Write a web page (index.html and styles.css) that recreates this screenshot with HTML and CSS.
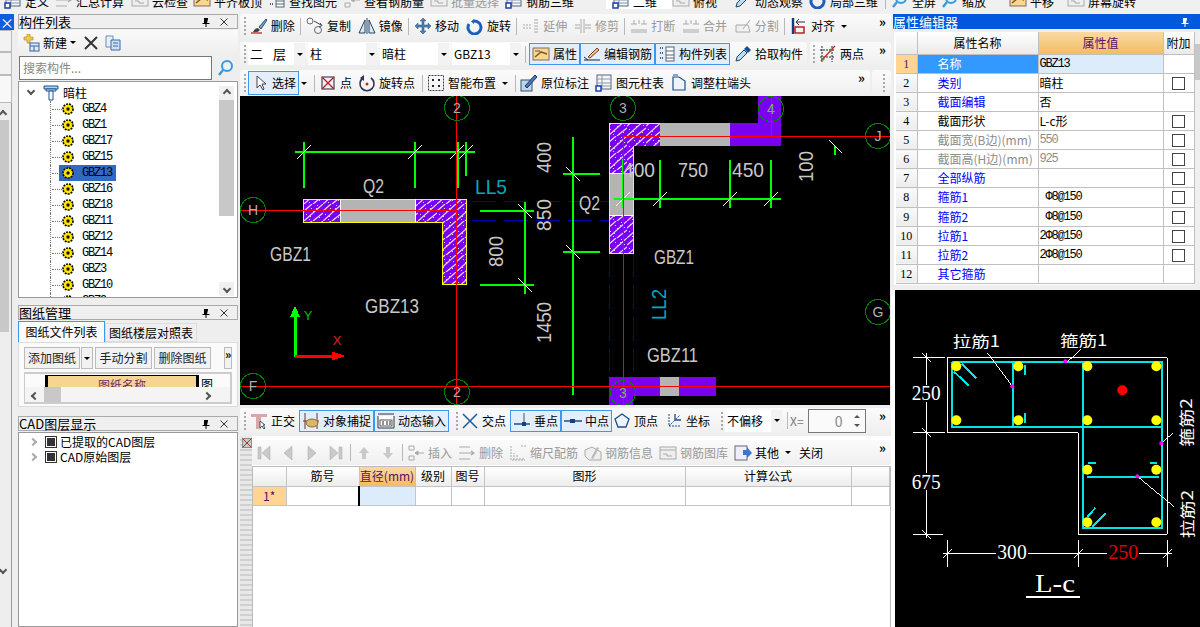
FILE: index.html
```html
<!DOCTYPE html>
<html lang="zh">
<head>
<meta charset="utf-8">
<title>属性编辑器</title>
<link rel="stylesheet" href="styles.css">
</head>
<body>
<svg class="defs" width="0" height="0" aria-hidden="true">
<defs>
<symbol id="brush" viewBox="0 0 18 18"><path d="M3 15 Q5 11 8 11 L10 13 Q8 16 3 15Z" fill="#444"/><path d="M9 10 L16 2 L17 3 L11 12Z" fill="#6aa0d8" stroke="#356"/><path d="M1 16 H12" stroke="#c33" stroke-width="1.4"/></symbol>
<symbol id="copyc" viewBox="0 0 18 18"><circle cx="4" cy="4" r="3" fill="none" stroke="#667"/><circle cx="12" cy="13" r="3.5" fill="none" stroke="#667"/><path d="M8 4 L15 8 M14 6 L16 8.5 L13 10" stroke="#345" fill="none"/></symbol>
<symbol id="mirror" viewBox="0 0 18 18"><path d="M7 3 L1 16 H7Z M11 3 L17 16 H11Z" fill="#dde8f4" stroke="#246"/><path d="M9 1 V17" stroke="#246"/></symbol>
<symbol id="move" viewBox="0 0 18 18"><path d="M9 1 L12 4 H10 V8 H14 V6 L17 9 L14 12 V10 H10 V14 H12 L9 17 L6 14 H8 V10 H4 V12 L1 9 L4 6 V8 H8 V4 H6Z" fill="#4a7fb5" stroke="#24507a" stroke-width=".5"/></symbol>
<symbol id="rot" viewBox="0 0 18 18"><path d="M8 2 L8 7 L5 4.5Z" fill="#1a5fc0"/><path d="M8 4 A6.5 6.5 0 1 1 3 7" fill="none" stroke="#1a5fc0" stroke-width="3"/></symbol>
<symbol id="ext" viewBox="0 0 18 18"><path d="M1 8 H10 M1 11 H10 M13 2 V16 M15 2 V16" stroke="#aaa" fill="none" stroke-dasharray="2 1"/></symbol>
<symbol id="trim" viewBox="0 0 18 18"><path d="M7 2 V16 M10 2 V16 M1 8 H6 M1 11 H6 M11 8 H17 M11 11 H17" stroke="#aaa" fill="none"/></symbol>
<symbol id="brk" viewBox="0 0 18 18"><path d="M4 3 V7 M9 3 V7 M14 3 V7 M1 7 H7 M11 7 H17 M1 13 H17 M1 15 H17" stroke="#aaa" fill="none"/></symbol>
<symbol id="split" viewBox="0 0 18 18"><path d="M2 15 L2 8 L14 8 M2 15 H16 M14 8 L16 15 M9 12 L16 3" stroke="#aaa" fill="#eee"/></symbol>
<symbol id="align" viewBox="0 0 18 18"><path d="M3 1 V17" stroke="#1a3a7c" stroke-width="2.4"/><path d="M6 5 H15 M6 5 L9 2 M6 5 L9 8" stroke="#333" fill="none"/><rect x="5" y="10" width="9" height="6" fill="none" stroke="#c02020" stroke-width="1.5"/></symbol>
<symbol id="attr" viewBox="0 0 18 18"><rect x="1" y="3" width="16" height="12" fill="#f6d98b" stroke="#866"/><path d="M3 12 L9 7 L15 9" stroke="#853" fill="none" stroke-width="1.6"/><path d="M3 6 H8" stroke="#555"/></symbol>
<symbol id="edit" viewBox="0 0 18 18"><path d="M1 15 H17 M1 12 L5 15" stroke="#223" fill="none"/><path d="M5 12 L14 3 L16 5 L7 13Z" fill="#e8c880" stroke="#742"/></symbol>
<symbol id="list" viewBox="0 0 18 18"><path d="M2 3 H5 M2 8 H5 M2 13 H5" stroke="#557" stroke-width="2" stroke-dasharray="1 1"/><rect x="8" y="2" width="8" height="14" fill="#fff" stroke="#567"/><path d="M8 6 H16 M8 10 H16 M8 13 H16" stroke="#567"/></symbol>
<symbol id="pick" viewBox="0 0 18 18"><path d="M2 16 L3 12 L10 5 L13 8 L6 15Z" fill="#bde" stroke="#246"/><path d="M10 4 L13 1 L17 5 L14 8Z" fill="#1a4f90"/></symbol>
<symbol id="two" viewBox="0 0 18 18"><path d="M3 1 V17 M13 1 V17 M1 5 H16 M1 12 H16" stroke="#223" stroke-dasharray="2 1"/><path d="M2 16 L16 1" stroke="#d22" stroke-width="1.3"/><circle cx="4" cy="14" r="1.6" fill="#5a8a2a"/><circle cx="12" cy="5" r="1.6" fill="#5a8a2a"/></symbol>
<symbol id="sel" viewBox="0 0 18 18"><path d="M6 2 V14 L9 11 L12 16 L13 15 L11 10 H15Z" fill="#fff" stroke="#445"/></symbol>
<symbol id="pt" viewBox="0 0 18 18"><rect x="3" y="3" width="12" height="12" fill="#eef" stroke="#223"/><path d="M3 3 L15 15 M15 3 L3 15" stroke="#b22" stroke-width="1.4"/></symbol>
<symbol id="rotp" viewBox="0 0 18 18"><path d="M5 4 A7 7 0 1 0 13 4" fill="none" stroke="#335" stroke-width="1.6"/><path d="M6 1 V7 L2 4Z" fill="#335"/><circle cx="9" cy="10" r="1.5" fill="#c22"/></symbol>
<symbol id="smart" viewBox="0 0 18 18"><rect x="1.500" y="1.500" width="15" height="15" fill="none" stroke="#345" stroke-dasharray="2 1"/><path d="M5 5 H7 V7 H5Z M11 5 H13 V7 H11Z M5 11 H7 V13 H5Z M11 11 H13 V13 H11Z" fill="#223"/></symbol>
<symbol id="orig" viewBox="0 0 18 18"><rect x="1" y="6" width="11" height="11" fill="#bcd4ee" stroke="#356"/><path d="M5 12 L15 1 L17 3 L7 14Z" fill="#4a78c0" stroke="#235"/></symbol>
<symbol id="coltb" viewBox="0 0 18 18"><rect x="2" y="1" width="14" height="14" fill="#f4f6fa" stroke="#567"/><path d="M2 5 H16 M2 9 H16 M2 12 H16 M7 1 V15" stroke="#89a"/><rect x="1" y="12" width="5" height="5" fill="#fff" stroke="#1a3fa0" stroke-width="1.5"/></symbol>
<symbol id="adj" viewBox="0 0 18 18"><path d="M3 3 H9 L15 7 V16 H3Z M8 1 H3" fill="#eef3fa" stroke="#1a4f90" stroke-width="1.2"/></symbol>
<symbol id="orth" viewBox="0 0 18 18"><path d="M1 2 H17 V5 H11 V17 H6 V5 H1Z" fill="#d8a8a8"/><path d="M10 9 V16 L12 14 L14 17 L15 16 L13 13 H15Z" fill="#fff" stroke="#456"/></symbol>
<symbol id="snap" viewBox="0 0 18 18"><path d="M3 1 V17 M15 1 V17 M1 9 H17" stroke="#633" fill="none"/><ellipse cx="10" cy="11" rx="6" ry="4" fill="#d8b860" stroke="#864"/></symbol>
<symbol id="dyn" viewBox="0 0 18 18"><path d="M1 2 H17 M1 4 V16 H17 V4" stroke="#333" fill="#fff"/><rect x="3" y="8" width="12" height="6" fill="#fff" stroke="#555"/><path d="M6 9 V13 M10 9 V13 M13 9 V13" stroke="#222"/></symbol>
<symbol id="cross" viewBox="0 0 18 18"><path d="M2 2 L16 16 M16 2 L2 16" stroke="#1a5ca0" stroke-width="1.5"/></symbol>
<symbol id="perp" viewBox="0 0 18 18"><path d="M1 12 H17" stroke="#1a4f90" stroke-width="1.5"/><path d="M11 1 V12" stroke="#456"/><rect x="9" y="10" width="4" height="4" fill="#1a3f80"/></symbol>
<symbol id="midp" viewBox="0 0 18 18"><path d="M0 9 H18" stroke="#1a4f90" stroke-width="1.5"/><rect x="6" y="7" width="5" height="4" fill="#1a3f80"/></symbol>
<symbol id="vtx" viewBox="0 0 18 18"><path d="M9 2 L16 7 L13 15 H5 L2 7Z" fill="#eef4fb" stroke="#1a4f90" stroke-width="1.3"/></symbol>
<symbol id="coord" viewBox="0 0 18 18"><path d="M4 2 V14 H16 M4 14 L15 3" stroke="#1a4f90" fill="none" stroke-dasharray="2 1"/><path d="M10 2 V8 H16" stroke="#1a4f90" fill="none" stroke-width="1.3"/></symbol>
<symbol id="first" viewBox="0 0 18 18"><path d="M3 3 H6 V15 H3Z M15 2 V16 L7 9Z" fill="#c9c9c9" stroke="#aaa" stroke-width=".5"/></symbol>
<symbol id="prev" viewBox="0 0 18 18"><path d="M13 2 V16 L5 9Z" fill="#c9c9c9" stroke="#aaa" stroke-width=".5"/></symbol>
<symbol id="next" viewBox="0 0 18 18"><path d="M5 2 V16 L13 9Z" fill="#c9c9c9" stroke="#aaa" stroke-width=".5"/></symbol>
<symbol id="last" viewBox="0 0 18 18"><path d="M12 3 H15 V15 H12Z M3 2 V16 L11 9Z" fill="#c9c9c9" stroke="#aaa" stroke-width=".5"/></symbol>
<symbol id="up" viewBox="0 0 18 18"><path d="M9 3 L14 9 H11 V15 H7 V9 H4Z" fill="#c9c9c9"/></symbol>
<symbol id="down" viewBox="0 0 18 18"><path d="M9 15 L14 9 H11 V3 H7 V9 H4Z" fill="#c9c9c9"/></symbol>
<symbol id="ins" viewBox="0 0 18 18"><path d="M2 2 H7 V6 H2Z M2 12 H7 V16 H2Z" fill="none" stroke="#aaa"/><path d="M8 9 H17 M8 9 L11 7 V11Z" stroke="#aaa" fill="#aaa"/></symbol>
<symbol id="del2" viewBox="0 0 18 18"><path d="M1 3 H12 M1 15 H12 M1 9 H16 M13 7 L16 9 L13 11" stroke="#aaa" fill="none" stroke-width="1.2"/></symbol>
<symbol id="scale" viewBox="0 0 18 18"><path d="M2 2 V16 H16 M5 16 V9 M8 16 V11 M11 16 V13 M14 16 V14 M12 2 H17" stroke="#aaa" fill="none" stroke-dasharray="2 1"/></symbol>
<symbol id="info" viewBox="0 0 18 18"><path d="M1 6 L8 3 L17 8 V16 H5 L1 12Z" fill="#eee" stroke="#aaa"/><path d="M7 14 L13 3 L15 4 L9 15Z" fill="#bbb"/></symbol>
<symbol id="lib" viewBox="0 0 18 18"><rect x="1" y="3" width="16" height="12" fill="#eee" stroke="#aaa"/><path d="M1 6 H17 M4 10 H8 V12 H13" stroke="#aaa" fill="none"/></symbol>
<symbol id="other" viewBox="0 0 18 18"><rect x="1" y="2" width="12" height="14" fill="#eef" stroke="#667"/><path d="M9 6 H13 V3 L18 9 L13 14 V11 H9Z" fill="#3a78d0"/></symbol>
<symbol id="nw" viewBox="0 0 18 18"><path d="M5 0 H8 V3 H11 V6 H8 V9 H5 V6 H2 V3 H5Z" fill="#f2c94a" stroke="#a5831a" stroke-width=".6"/><rect x="8" y="9" width="9" height="8" fill="#dfe9f5" stroke="#37629a"/><path d="M8 12 H17 M12 12 V17" stroke="#37629a"/></symbol>
<symbol id="xbig" viewBox="0 0 18 18"><path d="M3 3 L15 15 M15 3 L3 15" stroke="#333" stroke-width="2"/></symbol>
<symbol id="cp2" viewBox="0 0 18 18"><path d="M2 2 H9 V13 H2Z" fill="#e8f0fa" stroke="#6a8ab8"/><path d="M7 6 H16 V16 H7Z" fill="#cfe0f5" stroke="#3a6aa8"/><path d="M9 9 H14 M9 12 H14" stroke="#3a6aa8"/></symbol>
<symbol id="mag" viewBox="0 0 18 18"><circle cx="10" cy="7" r="5" fill="#e6f3fb" stroke="#3a9ad8" stroke-width="2"/><path d="M6 11 L2 16" stroke="#3a9ad8" stroke-width="2.4"/></symbol>
<symbol id="gear" viewBox="0 0 12 12"><circle cx="6" cy="6" r="5" fill="#ffe000" stroke="#000" stroke-width="1.6" stroke-dasharray="2 1"/><circle cx="6" cy="6" r="3.400" fill="#ffe600"/><circle cx="6" cy="6" r="1.700" fill="#111"/></symbol>
<symbol id="colm" viewBox="0 0 16 16"><path d="M1 1 H15 V4 H1Z" fill="#b8d0ec" stroke="#1a5090"/><path d="M3 4 H13 V6 H3Z" fill="#dbe8f6" stroke="#1a5090"/><path d="M6 6 H10 V15 H6Z" fill="#fff" stroke="#1a5090"/></symbol>
<symbol id="pin" viewBox="0 0 10 10"><path d="M3 1 H7 V6 H8.500 V7 H5.500 V10 H4.500 V7 H1.500 V6 H3Z M6 2 V6 H7" fill="#000"/></symbol>
<symbol id="cl" viewBox="0 0 10 10"><path d="M1.500 1.500 L8.500 8.500 M8.500 1.500 L1.500 8.500" stroke="#333" fill="none"/></symbol>
<pattern id="hatch" patternUnits="userSpaceOnUse" width="19" height="17">
<rect width="19" height="17" fill="#7a00f0"/>
<path d="M0 17 L19 0 M9 17 L19 9 M0 7 L8 0" stroke="#e4e0f0" stroke-width="1.200"/>
<path d="M3 3 h1 v1 h-1z M12 4 h1 v1 h-1z M6 12 h1 v1 h-1z M15 13 h1 v1 h-1z M9 7 h1 v1 h-1z M2 10 h1 v1 h-1z M16 6 h1 v1 h-1z M13 1 h1 v1 h-1z M5 15 h1 v1 h-1z M11 14 h1 v1 h-1z M7 4 h1 v1 h-1z" fill="#ddd"/>
</pattern>
</defs>
</svg>

<header class="topbar">
<span class="it t1"><svg class="i"><use href="#coltb"/></svg>定义</span>
<span class="it t2"><svg class="i"><use href="#del2"/></svg>汇总计算</span>
<span class="it t3"><svg class="i"><use href="#lib"/></svg>云检查</span>
<span class="it t4"><svg class="i"><use href="#attr"/></svg>平齐板顶</span>
<span class="it t5"><svg class="i"><use href="#list"/></svg>查找图元</span>
<span class="it t6"><svg class="i"><use href="#ins"/></svg>查看钢筋量</span>
<span class="it t7 off"><svg class="i"><use href="#lib"/></svg>批量选择</span>
<span class="it t8"><svg class="i"><use href="#coltb"/></svg>钢筋三维</span>
<span class="it t9"><svg class="i"><use href="#coltb"/></svg>二维</span>
<span class="it t10"><svg class="i"><use href="#lib"/></svg>俯视</span>
<span class="it t11"><svg class="i"><use href="#pick"/></svg>动态观察</span>
<span class="it t12"><svg class="i"><use href="#rot"/></svg>局部三维</span>
<span class="sep t13"></span>
<span class="it t14"><svg class="i"><use href="#mag"/></svg>全屏</span>
<span class="it t15"><svg class="i"><use href="#mag"/></svg>缩放</span>
<span class="it t16"><svg class="i"><use href="#attr"/></svg>平移</span>
<span class="it t17"><svg class="i"><use href="#lib"/></svg>屏幕旋转</span>
</header>

<div class="main">
<aside class="sliver">
<div class="sl-x">×</div>
<div class="sl-box"></div>
<div class="sl-box sl-2"></div>
<div class="sl-box sl-3"></div>
<div class="sl-tree">
<div class="sl-arrow"><i class="cv u"></i></div>
<div class="sl-thumb"></div>
<div class="sl-down"><i class="cv d"></i></div>
</div>
</aside>

<section class="left">
<div class="ptitle"><span class="ptext">构件列表</span><svg class="pico"><use href="#pin"/></svg><svg class="pico"><use href="#cl"/></svg></div>
<div class="lt-tools">
<svg class="i"><use href="#nw"/></svg><span class="lt-new">新建</span><span class="caret"></span>
<svg class="i lt-x"><use href="#xbig"/></svg><svg class="i lt-c"><use href="#cp2"/></svg>
</div>
<div class="searchrow">
<div class="search">搜索构件...</div>
<svg class="i srch"><use href="#mag"/></svg>
</div>
<div class="tree">
<div class="tree-list">
<div class="root"><i class="cv d chev"></i><svg class="colm"><use href="#colm"/></svg><span>暗柱</span></div>
<div class="node"><svg class="g"><use href="#gear"/></svg><span class="mono">GBZ4</span></div>
<div class="node"><svg class="g"><use href="#gear"/></svg><span class="mono">GBZ1</span></div>
<div class="node"><svg class="g"><use href="#gear"/></svg><span class="mono">GBZ17</span></div>
<div class="node"><svg class="g"><use href="#gear"/></svg><span class="mono">GBZ15</span></div>
<div class="node on"><svg class="g"><use href="#gear"/></svg><span class="mono">GBZ13</span></div>
<div class="node"><svg class="g"><use href="#gear"/></svg><span class="mono">GBZ16</span></div>
<div class="node"><svg class="g"><use href="#gear"/></svg><span class="mono">GBZ18</span></div>
<div class="node"><svg class="g"><use href="#gear"/></svg><span class="mono">GBZ11</span></div>
<div class="node"><svg class="g"><use href="#gear"/></svg><span class="mono">GBZ12</span></div>
<div class="node"><svg class="g"><use href="#gear"/></svg><span class="mono">GBZ14</span></div>
<div class="node"><svg class="g"><use href="#gear"/></svg><span class="mono">GBZ3</span></div>
<div class="node"><svg class="g"><use href="#gear"/></svg><span class="mono">GBZ10</span></div>
<div class="node"><svg class="g"><use href="#gear"/></svg><span class="mono">GBZ9</span></div>
</div>
<div class="tree-sb"><div class="sb-a"><i class="cv u"></i></div><div class="sb-t"></div><div class="sb-a sb-d"><i class="cv d"></i></div></div>
</div>

<div class="ptitle p2"><span class="ptext">图纸管理</span><svg class="pico"><use href="#pin"/></svg><svg class="pico"><use href="#cl"/></svg></div>
<div class="tabs"><span class="tab act">图纸文件列表</span><span class="tab">图纸楼层对照表</span></div>
<div class="dwg">
<div class="dwg-btns">
<span class="btn b1">添加图纸</span><span class="btn b2"><span class="caret"></span></span><span class="btn b3">手动分割</span><span class="btn b3">删除图纸</span><span class="more-box">»</span>
</div>
<div class="dwg-tbl">
<div class="dwg-head"><span class="dh-cell">图纸名称</span><span class="dh-more">图</span></div>
<div class="dwg-sb"><span class="dsb-l"><i class="cv l"></i></span><span class="dsb-t"></span><span class="dsb-r"><i class="cv r"></i></span></div>
</div>
</div>

<div class="ptitle p3"><span class="ptext">CAD图层显示</span><svg class="pico"><use href="#pin"/></svg><svg class="pico"><use href="#cl"/></svg></div>
<div class="layers">
<div class="layer"><i class="cv r chev2"></i><span class="chk"></span><span>已提取的CAD图层</span></div>
<div class="layer"><i class="cv r chev2"></i><span class="chk"></span><span>CAD原始图层</span></div>
</div>
</section>

<section class="center">
<div class="tb tb1">
<span class="grip"></span>
<span class="it"><svg class="i"><use href="#brush"/></svg>删除</span><span class="sep"></span>
<span class="it"><svg class="i"><use href="#copyc"/></svg>复制</span>
<span class="it"><svg class="i"><use href="#mirror"/></svg>镜像</span><span class="sep"></span>
<span class="it"><svg class="i"><use href="#move"/></svg>移动</span>
<span class="it"><svg class="i"><use href="#rot"/></svg>旋转</span><span class="sep"></span>
<span class="it off"><svg class="i"><use href="#ext"/></svg>延伸</span>
<span class="it off"><svg class="i"><use href="#trim"/></svg>修剪</span><span class="sep"></span>
<span class="it off"><svg class="i"><use href="#brk"/></svg>打断</span>
<span class="it off"><svg class="i"><use href="#brk"/></svg>合并</span>
<span class="it off"><svg class="i"><use href="#split"/></svg>分割</span><span class="sep"></span>
<span class="it"><svg class="i"><use href="#align"/></svg>对齐<span class="caret"></span></span>
<span class="more">»</span>
</div>

<div class="tbrow">
<div class="tb tb2">
<span class="grip"></span>
<span class="dd d0"><span class="dd-t spread"><span>二</span><span>层</span></span><span class="dd-b"><span class="caret"></span></span></span>
<span class="dd"><span class="dd-t">柱</span><span class="dd-b"><span class="caret"></span></span></span>
<span class="dd"><span class="dd-t">暗柱</span><span class="dd-b"><span class="caret"></span></span></span>
<span class="dd"><span class="dd-t">GBZ13</span><span class="dd-b"><span class="caret"></span></span></span>
<span class="sep s2"></span>
<span class="it act w1"><svg class="i"><use href="#attr"/></svg>属性</span>
<span class="it act w2"><svg class="i"><use href="#edit"/></svg>编辑钢筋</span>
<span class="it act w2"><svg class="i"><use href="#list"/></svg>构件列表</span>
<span class="it pick"><svg class="i"><use href="#pick"/></svg>拾取构件</span>
</div>
<div class="tb tb2b">
<span class="grip"></span>
<span class="it"><svg class="i"><use href="#two"/></svg>两点</span>
<span class="more">»</span>
</div>
</div>

<div class="tbrow">
<div class="tb tb3">
<span class="grip"></span>
<span class="it act w1 s3"><svg class="i"><use href="#sel"/></svg>选择</span><span class="caret cs"></span><span class="sep"></span>
<span class="it"><svg class="i"><use href="#pt"/></svg>点</span>
<span class="it"><svg class="i"><use href="#rotp"/></svg>旋转点</span><span class="sep"></span>
<span class="it"><svg class="i"><use href="#smart"/></svg>智能布置<span class="caret"></span></span><span class="sep"></span>
<span class="it"><svg class="i"><use href="#orig"/></svg>原位标注</span>
<span class="it"><svg class="i"><use href="#coltb"/></svg>图元柱表</span>
<span class="it"><svg class="i"><use href="#adj"/></svg>调整柱端头</span>
<span class="more">»</span>
</div>
<div class="tb tb3b"><span class="grip"></span></div>
</div>

<div class="canvas">
<svg class="cad" viewBox="240 96 650 309" width="650" height="309">
<g shape-rendering="crispEdges">
<path d="M472 201 H610 M472 220 H610" stroke="#0000b0" stroke-dasharray="24 8" fill="none"/>
<path d="M609 253 V371 M633 253 V371" stroke="#0000b0" stroke-dasharray="24 8" fill="none"/>

<path d="M304 199 H340 V222 H304Z M415 199 H466 V284 H442 V222 H415Z" fill="url(#hatch)"/>
<rect x="340" y="199" width="75" height="23" fill="#b4b4b4"/>
<path d="M303.500 199.500 H466.500 V284.500 H442.500 V222.500 H303.500Z" fill="none" stroke="#ffff00"/>
<path d="M340.500 199 V222 M415.500 199 V222" stroke="#fff"/>

<path d="M609 123 H660 V146 H633 V253 H609Z" fill="url(#hatch)"/>
<rect x="609" y="173" width="24" height="42" fill="#b4b4b4"/>
<rect x="660" y="123" width="70" height="23" fill="#b4b4b4"/>
<path d="M730 123 H758 V96 H781 V146 H730Z" fill="#7a00f0"/>
<path d="M660 123.500 H609.500 V253.500 H633.500 V146" fill="none" stroke="#ffff00"/>
<path d="M609 173.500 H633 M609 215.500 H633" stroke="#fff"/>

<path d="M609 377 H660 V396 H633 V405 H609Z M679 377 H716 V396 H679Z" fill="#7a00f0"/>
<rect x="660" y="377" width="19" height="19" fill="#b4b4b4"/>

<g stroke="#00ff00" stroke-width="2" fill="none">
<path d="M295 152 H475 M304 142 V188 M415 142 V188 M458 142 V188 M466 142 V176"/>
<path d="M480 211 H534 M480 285 H534 M525 202 V294"/>
<path d="M563 174 H600 M563 252 H600 M573 137 V395"/>
<path d="M614 199 H781 M623 159 V208 M660 160 V208 M730 160 V208 M771 160 V208"/>
<path d="M835 146 V155"/>
</g>
<g stroke="#fff" fill="none">
<path d="M297 159 L311 145 M408 159 L422 145 M450 159 L464 145 M459 159 L473 145"/>
<path d="M518 204 L532 218 M518 278 L532 292 M566 167 L580 181 M566 245 L580 259"/>
<path d="M616 206 L630 192 M653 206 L667 192 M723 206 L737 192 M764 206 L778 192 M829 140 L842 153"/>
</g>
<g stroke="#ff0000" fill="none">
<path d="M456.500 96 V405 M240 210.500 H458 M240 386.500 H891 M623.500 136 V405 M623 136.500 H891 M771.500 96 V136"/>
</g>
<g stroke="#008000" fill="none">
<circle cx="457" cy="108" r="12.500"/><circle cx="457" cy="392" r="12.500"/><circle cx="253" cy="210" r="12.500"/><circle cx="253" cy="386" r="12.500"/><circle cx="623" cy="108" r="12.500"/><circle cx="623" cy="393" r="12.500"/><circle cx="771" cy="109" r="12.500"/><circle cx="878" cy="136" r="12.500"/><circle cx="878" cy="312" r="12.500"/>
</g>
<path d="M294 356 V316 H291 L295 307 L299 316 H296 V356Z" fill="#00ff00" stroke="#00ff00"/>
<path d="M295 355 H332 V352 L344 356 L332 360 V357 H295Z" fill="#ff0000" stroke="#ff0000"/>
</g>

<g class="cadt">
<text x="363" y="193" textLength="21" lengthAdjust="spacingAndGlyphs">Q2</text>
<text class="cy" x="475" y="194" textLength="32" lengthAdjust="spacingAndGlyphs">LL5</text>
<text x="270" y="261" textLength="41" lengthAdjust="spacingAndGlyphs">GBZ1</text>
<text x="365" y="313" textLength="54" lengthAdjust="spacingAndGlyphs">GBZ13</text>
<text x="551" y="173" transform="rotate(-90 551 173)" textLength="31" lengthAdjust="spacingAndGlyphs">400</text>
<text x="551" y="231" transform="rotate(-90 551 231)" textLength="32" lengthAdjust="spacingAndGlyphs">850</text>
<text x="503" y="267" transform="rotate(-90 503 267)" textLength="31" lengthAdjust="spacingAndGlyphs">800</text>
<text x="551" y="343" transform="rotate(-90 551 343)" textLength="41" lengthAdjust="spacingAndGlyphs">1450</text>
<text x="623" y="177" textLength="32" lengthAdjust="spacingAndGlyphs">400</text>
<text x="678" y="177" textLength="30" lengthAdjust="spacingAndGlyphs">750</text>
<text x="732" y="177" textLength="32" lengthAdjust="spacingAndGlyphs">450</text>
<text x="813" y="182" transform="rotate(-90 813 182)" textLength="31" lengthAdjust="spacingAndGlyphs">100</text>
<text x="579" y="210" textLength="21" lengthAdjust="spacingAndGlyphs">Q2</text>
<text x="654" y="264" textLength="40" lengthAdjust="spacingAndGlyphs">GBZ1</text>
<text class="cy" x="666" y="320" transform="rotate(-90 666 320)" textLength="31" lengthAdjust="spacingAndGlyphs">LL2</text>
<text x="647" y="362" textLength="51" lengthAdjust="spacingAndGlyphs">GBZ11</text>
</g>
<g class="cadm">
<text x="457" y="113">2</text><text x="457" y="397">2</text><text x="253" y="215">H</text><text x="253" y="391">F</text><text x="623" y="113">3</text><text class="ol" x="623" y="398">3</text><text class="ol" x="771" y="114">4</text><text x="878" y="141">J</text><text x="878" y="317">G</text>
</g>
<text class="ax axg" x="308" y="320">Y</text>
<text class="ax axr" x="337" y="345">X</text>
</svg>
</div>

<div class="tb tb4">
<span class="grip"></span>
<span class="it"><svg class="i"><use href="#orth"/></svg>正交</span>
<span class="it act w2 s4"><svg class="i"><use href="#snap"/></svg>对象捕捉</span>
<span class="it act w2"><svg class="i"><use href="#dyn"/></svg>动态输入</span>
<span class="grip g2"></span>
<span class="it"><svg class="i"><use href="#cross"/></svg>交点</span>
<span class="it act w1 s4"><svg class="i"><use href="#perp"/></svg>垂点</span>
<span class="it act w1 s4c"><svg class="i"><use href="#midp"/></svg>中点</span>
<span class="it v4"><svg class="i"><use href="#vtx"/></svg>顶点</span>
<span class="it"><svg class="i"><use href="#coord"/></svg>坐标</span>
<span class="grip g3"></span>
<span class="dd d4"><span class="dd-t">不偏移</span><span class="dd-b"><span class="caret"></span></span></span>
<span class="sep s4s"></span>
<span class="xeq">X=</span>
<span class="spin"><span class="spin-v">0</span><span class="spin-b"><i class="up"></i><i class="dn"></i></span></span>
<span class="more">»</span>
</div>

<div class="lower">
<div class="splitter"><svg class="close-box" viewBox="0 0 10 10"><rect width="10" height="10" fill="#c8c8c8" stroke="#555"/><path d="M1 1 L9 9 M9 1 L1 9" stroke="#a33"/></svg></div>
<div class="lower-r">
<div class="tb tb5">
<svg class="i n"><use href="#first"/></svg><svg class="i n"><use href="#prev"/></svg><svg class="i n"><use href="#next"/></svg><svg class="i n"><use href="#last"/></svg>
<span class="sep"></span>
<svg class="i n"><use href="#up"/></svg><svg class="i n"><use href="#down"/></svg>
<span class="sep"></span>
<span class="it off"><svg class="i"><use href="#ins"/></svg>插入</span>
<span class="it off"><svg class="i"><use href="#del2"/></svg>删除</span>
<span class="it off"><svg class="i"><use href="#scale"/></svg>缩尺配筋</span>
<span class="it off"><svg class="i"><use href="#info"/></svg>钢筋信息</span>
<span class="it off"><svg class="i"><use href="#lib"/></svg>钢筋图库</span>
<span class="it"><svg class="i"><use href="#other"/></svg>其他<span class="caret"></span></span>
<span class="it close">关闭</span>
<span class="more">»</span>
</div>
<div class="gridwrap">
<table class="grid">
<colgroup><col class="g0"><col class="g1"><col class="g2c"><col class="g3c"><col class="g4"><col class="g5"><col class="g6"><col></colgroup>
<tr><th></th><th>筋号</th><th class="hot">直径(mm)</th><th>级别</th><th>图号</th><th>图形</th><th>计算公式</th><th></th></tr>
<tr><td class="rh">1*</td><td></td><td class="cur"></td><td></td><td></td><td></td><td></td><td></td></tr>
</table>
</div>
</div>
</div>
</section>

<section class="right">
<div class="rtitle"><span>属性编辑器</span><svg class="pico inv"><use href="#pin"/></svg></div>
<div class="props">
<table class="ptable">
<colgroup><col class="pc0"><col class="pc1"><col class="pc2"><col class="pc3"></colgroup>
<tr><th></th><th>属性名称</th><th class="hot">属性值</th><th>附加</th></tr>
<tr><td class="rh act1">1</td><td class="n sel">名称</td><td class="v cur mono">GBZ13</td><td></td></tr>
<tr><td class="rh">2</td><td class="n lk">类别</td><td class="v">暗柱</td><td><span class="box"></span></td></tr>
<tr><td class="rh">3</td><td class="n lk">截面编辑</td><td class="v">否</td><td></td></tr>
<tr><td class="rh">4</td><td class="n">截面形状</td><td class="v">L-c形</td><td><span class="box"></span></td></tr>
<tr><td class="rh">5</td><td class="n gr">截面宽(B边)(mm)</td><td class="v gr mono">550</td><td><span class="box"></span></td></tr>
<tr><td class="rh">6</td><td class="n gr">截面高(H边)(mm)</td><td class="v gr mono">925</td><td><span class="box"></span></td></tr>
<tr><td class="rh">7</td><td class="n lk">全部纵筋</td><td class="v"></td><td><span class="box"></span></td></tr>
<tr><td class="rh">8</td><td class="n lk">箍筋1</td><td class="v mono">&nbsp;Φ8@150</td><td><span class="box"></span></td></tr>
<tr><td class="rh">9</td><td class="n lk">箍筋2</td><td class="v mono">&nbsp;Φ8@150</td><td><span class="box"></span></td></tr>
<tr><td class="rh">10</td><td class="n lk">拉筋1</td><td class="v mono">2Φ8@150</td><td><span class="box"></span></td></tr>
<tr><td class="rh">11</td><td class="n lk">拉筋2</td><td class="v mono">2Φ8@150</td><td><span class="box"></span></td></tr>
<tr><td class="rh">12</td><td class="n lk">其它箍筋</td><td class="v"></td><td></td></tr>
</table>
<div class="psb"></div>
</div>
<div class="preview">
<svg class="pv" viewBox="895 290 305 337" width="305" height="337">
<g transform="translate(890 290) scale(.33333)">
<g shape-rendering="crispEdges">
<path d="M172 203 H832 V733 H565 V428 H172Z" fill="none" stroke="#fff" stroke-width="3"/>
<path d="M186 215 H816 V714 H580 V215 M186 215 V410 H816 M368 215 V410 M590 560 H808" fill="none" stroke="#00e6e6" stroke-width="6"/>
<path d="M216 222 L260 265 M192 245 L236 287 M592 680 L617 653 M607 710 L647 671 M406 225 V255 M406 370 V400 M595 520 H617 M780 518 H800" fill="none" stroke="#00e6e6" stroke-width="6"/>
<path d="M292 188 L367 289 M530 218 L572 178 M814 460 L850 428 M742 559 L852 650" stroke="#fff" stroke-width="3" fill="none"/>
<path d="M109 190 V285 M109 335 V550 M109 600 V745 M69 203 H164 M69 428 H164 M69 733 H158 M160 790 H318 M415 790 H650 M748 790 H845 M172 750 V830 M565 750 V830 M832 750 V830 M96 190 L122 216 M96 415 L122 441 M96 720 L122 746 M158 804 L186 776 M551 804 L579 776 M818 804 L846 776" stroke="#fff" stroke-width="3" fill="none"/>
<path d="M408 920 H570" stroke="#fff" stroke-width="6"/>
</g>
<g fill="#ffff00">
<circle cx="199" cy="229" r="15"/><circle cx="385" cy="229" r="15"/><circle cx="592" cy="229" r="15"/><circle cx="799" cy="229" r="15"/><circle cx="199" cy="391" r="15"/><circle cx="385" cy="391" r="15"/><circle cx="592" cy="391" r="15"/><circle cx="799" cy="391" r="15"/><circle cx="592" cy="539" r="15"/><circle cx="799" cy="539" r="15"/><circle cx="592" cy="697" r="15"/><circle cx="799" cy="697" r="15"/>
</g>
<circle cx="697" cy="301" r="15" fill="#ff0000"/>
<g fill="#ff00ff"><circle cx="526" cy="214" r="6"/><circle cx="367" cy="289" r="6"/><circle cx="814" cy="460" r="6"/><circle cx="742" cy="559" r="6"/></g>
<g class="pvt">
<text class="cn" x="188" y="172" textLength="142" lengthAdjust="spacingAndGlyphs">拉筋1</text>
<text class="cn" x="510" y="169" textLength="142" lengthAdjust="spacingAndGlyphs">箍筋1</text>
<text class="cn" x="905" y="470" transform="rotate(-90 905 470)" textLength="145" lengthAdjust="spacingAndGlyphs">箍筋2</text>
<text class="cn" x="910" y="745" transform="rotate(-90 910 745)" textLength="145" lengthAdjust="spacingAndGlyphs">拉筋2</text>
<text x="65" y="330" textLength="87" lengthAdjust="spacingAndGlyphs">250</text>
<text x="65" y="597" textLength="87" lengthAdjust="spacingAndGlyphs">675</text>
<text x="322" y="808" textLength="88" lengthAdjust="spacingAndGlyphs">300</text>
<text class="rd" x="655" y="808" textLength="90" lengthAdjust="spacingAndGlyphs">250</text>
<text class="lc" x="435" y="905" textLength="120" lengthAdjust="spacingAndGlyphs">L-c</text>
</g>
</g>
</svg>
</div>
</section>
</div>
</body>
</html>
```

FILE: styles.css
```css
* { box-sizing: border-box; }
html, body { margin: 0; padding: 0; }
body {
  width: 1200px; height: 627px; overflow: hidden;
  background: #eeeeee; color: #000;
  font: 12px/16px "Noto Sans CJK SC", "Liberation Sans", sans-serif;
}
.defs { position: absolute; }
.mono { font-family: "Liberation Mono", "Noto Sans CJK SC", monospace; font-size: 12px; letter-spacing: -1.2px; }

.i { width: 18px; height: 18px; flex: none; }
.it { display: inline-flex; align-items: center; gap: 3px; flex: none; white-space: nowrap; }
.off { color: #9a9a9a; }
.sep { width: 1px; height: 17px; background: #b8b8b8; flex: none; }
.caret { display: inline-block; width: 0; height: 0; border: 3px solid transparent; border-top: 3px solid #000; border-bottom: 0; margin-left: 3px; flex: none; }
.cv { display: inline-block; width: 6px; height: 6px; border-right: 2px solid #555; border-bottom: 2px solid #555; flex: none; }
.cv.d { transform: rotate(45deg); }
.cv.u { transform: rotate(-135deg); }
.cv.r { transform: rotate(-45deg); }
.cv.l { transform: rotate(135deg); }

/* top clipped bar */
.topbar { height: 14px; display: flex; overflow: hidden; background: #f0f0f0; align-items: flex-end; }
.topbar .it, .topbar .sep { height: 20px; margin-bottom: 5px; }
.topbar .it { align-items: flex-end; line-height: 14px; }
.t1 { margin-left: 4px; width: 51px; }
.t2 { width: 76px; }
.t3 { width: 62px; }
.t4 { width: 75px; }
.t5 { width: 75px; }
.t6 { width: 87px; }
.t7 { width: 75px; }
.t8 { width: 101px; }
.t9 { width: 66px; background: #fff; padding-left: 6px; }
.t10 { width: 62px; }
.t11 { width: 75px; }
.t12 { width: 76px; }
.t13 { margin-right: 5px; }
.t14 { width: 50px; }
.t15 { width: 68px; }
.t16 { width: 58px; }
.t17 { width: 70px; }

.main { display: flex; height: 613px; }

/* far-left sliver */
.sliver { width: 12px; margin-right: 6px; flex: none; display: flex; flex-direction: column; }
.sl-x { height: 16px; background: #0a5fe0; color: #fff; font-size: 14px; line-height: 16px; text-align: center; width: 14px; }
.sl-box { height: 22px; border: 1px solid #bbb; border-left: 0; background: #f2f2f2; }
.sl-2 { height: 23px; }
.sl-3 { height: 28px; background: #f8f8f8; }
.sl-tree { flex: 1; border-right: 1px solid #999; background: #eee; padding-top: 5px; }
.sl-arrow { height: 12px; line-height: 8px; padding-left: 0; }
.sl-thumb { width: 9px; height: 212px; background: #c8c8c8; }
.sl-down { line-height: 8px; margin-top: 232px; }

/* left column */
.left { width: 220px; flex: none; display: flex; flex-direction: column; }
.ptitle { height: 15px; flex: none; display: flex; align-items: center; border: 1px solid #aaa; background: #efefef; font-size: 13px; line-height: 13px; }
.ptext { flex: 1; white-space: nowrap; }
.pico { width: 10px; height: 10px; margin-right: 8px; flex: none; }
.pico.inv { filter: invert(1); margin-right: 10px; }
.lt-tools { height: 25px; margin-top: 1px; display: flex; align-items: center; padding-left: 4px; background: linear-gradient(#fafafa, #eeeeee); flex: none; }
.lt-new { margin-left: 3px; }
.lt-x { margin-left: 6px; }
.lt-c { margin-left: 4px; }
.searchrow { height: 26px; display: flex; align-items: center; flex: none; }
.search { width: 193px; height: 24px; margin-left: 1px; border: 1px solid #777; background: #fff; color: #888; line-height: 22px; padding-left: 3px; }
.srch { margin-left: 5px; }
.tree { height: 217px; border: 1px solid #999; background: #fff; display: flex; overflow: hidden; flex: none; }
.tree-list { width: 200px; padding: 2px 0 0 5px; flex: none; height: 215px; overflow: hidden; }
.root { height: 17px; display: flex; align-items: center; padding-left: 4px; }
.chev { margin-right: 6px; margin-top: -3px; }
.colm { width: 16px; height: 16px; margin: 0 4px 0 3px; flex: none; }
.node { height: 16px; width: 97px; display: flex; align-items: center; margin-left: 26px; position: relative; border-left: 1px dotted #777; }
.node::before { content: ""; width: 12px; border-top: 1px dotted #777; position: absolute; left: 1px; top: 8px; }
.node .g { width: 12px; height: 12px; position: absolute; left: 11px; top: 2px; z-index: 1; }
.node .mono { position: relative; z-index: 1; margin-left: 31px; }
.node.on::after { content: ""; position: absolute; left: 8px; top: 0; bottom: 0; width: 57px; background: #316ac5; }
.tree-sb { width: 15px; padding-top: 4px; display: flex; flex-direction: column; }
.sb-a { height: 14px; line-height: 10px; text-align: center; background: #f0f0f0; }
.sb-t { height: 116px; background: #c8c8c8; }
.sb-d { margin-top: 66px; }
.p2 { margin-top: 7px; }
.tabs { height: 21px; margin-top: 1px; display: flex; align-items: flex-end; flex: none; }
.tab { height: 19px; border: 1px solid #ddd; background: #efefef; line-height: 18px; width: 92px; text-align: center; white-space: nowrap; overflow: hidden; }
.tab.act { height: 21px; width: 87px; background: #fbfbfb; border-bottom: 0; line-height: 20px; }
.dwg { height: 65px; border: 1px solid #ddd; background: #fafafa; flex: none; padding: 4px 5px 0; }
.dwg-btns { display: flex; height: 22px; gap: 2px; }
.btn { border: 1px solid #bbb; background: #f2f2f2; line-height: 20px; text-align: center; color: #222; flex: none; }
.b1 { width: 56px; margin-right: -1px; }
.b2 { width: 12px; display: flex; align-items: center; justify-content: center; }
.b2 .caret { margin: 0; }
.b3 { width: 57px; }
.more-box { width: 12px; margin-left: 11px; border: 1px solid #bbb; font-weight: 700; line-height: 12px; text-align: center; background: #f2f2f2; }
.dwg-tbl { margin-top: 3px; height: 32px; border: 2px solid #ccc; border-left-width: 1px; overflow: hidden; background: #f4f4f4; }
.dwg-head { height: 13px; overflow: hidden; display: flex; padding: 1px 0 0 20px; background: #fbfbfb; }
.dh-cell { width: 154px; height: 18px; background: #f6d491; border-left: 3px solid #000; border-right: 3px solid #000; border-top: 1px solid #000; text-align: center; color: #703070; line-height: 18px; white-space: nowrap; overflow: hidden; }
.dh-more { margin-left: 2px; line-height: 18px; }
.dwg-sb { height: 15px; display: flex; align-items: center; }
.dsb-l { width: 19px; text-align: center; line-height: 8px; }
.dsb-t { width: 17px; height: 15px; background: #c8c8c8; }
.dsb-r { margin-left: 143px; line-height: 8px; }
.p3 { margin-top: 9px; }
.layers { flex: 1; margin-top: 1px; border: 1px solid #999; background: #fff; padding-top: 1px; }
.layer { height: 15px; display: flex; align-items: center; padding-left: 11px; white-space: nowrap; }
.chev2 { border-color: #aaa; margin-right: 9px; }
.chk { width: 12px; height: 12px; border: 1px solid #333; background: #333; box-shadow: inset 0 0 0 1px #fff; margin-right: 3px; flex: none; }

/* center */
.center { width: 651px; margin-left: 2px; flex: none; display: flex; flex-direction: column; }
.tb { display: flex; align-items: center; flex: none; background: linear-gradient(#fbfbfb, #efefef); border-radius: 3px; }
.grip { width: 2px; height: 18px; margin: 0 6px 0 4px; flex: none; background: repeating-linear-gradient(#a8a8a8 0 2px, transparent 2px 4px); }
.more { margin-left: auto; padding-right: 5px; font-weight: 700; font-size: 13px; line-height: 10px; align-self: flex-start; padding-top: 3px; }
.tb1 { height: 24px; gap: 6.8px; }
.tb1 .grip { margin-right: -3px; }
.tb1 .sep { margin: 0 -1.7px; }
.tbrow { display: flex; gap: 3px; margin-top: 4px; flex: none; }
.tb2 { width: 567px; height: 24px; }
.tb2 .grip { margin-right: 2px; }
.tb2b { flex: 1; height: 24px; }
.tb2b .grip { margin: 0 4px 0 3px; }
.dd { display: flex; width: 69px; height: 22px; background: #fff; margin-right: 3px; flex: none; }
.d0 { width: 57px; }
.dd-t { flex: 1; padding-left: 2px; line-height: 21px; white-space: nowrap; }
.spread { display: flex; justify-content: space-between; padding: 0 8px 0 2px; font-size: 13px; }
.dd-b { width: 11px; background: #f2f2f2; display: flex; align-items: center; justify-content: center; }
.dd-b .caret { margin: 0; }
.s2 { margin: 0 3px 0 1px; }
.act { background: #e4eefa; border: 1px solid #3d97ee; height: 22px; justify-content: center; }
.w1 { width: 51px; }
.w2 { width: 75px; }
.pick { margin-left: 4px; }
.tb3 { width: 630px; height: 26px; gap: 6px; }
.tb3 .grip { margin: 0 -4px 0 4px; }
.tb3 .sep { margin: 0 -2px 0 1px; }
.tb3b { flex: 1; height: 26px; margin-left: -1px; }
.tb3b .grip { margin: 0 0 0 11px; }
.s3 { height: 24px; }
.cs { margin: 0 0 0 -4px; }
.canvas { height: 309px; width: 650px; background: #000; flex: none; }
.cad, .pv { display: block; }
.cadt text { font: 21px "Liberation Sans", sans-serif; fill: #c8c8c8; }
.cadt text.cy { fill: #00a9bd; }
.cadm text { font: 14px "Liberation Sans", sans-serif; fill: #b0b0b0; text-anchor: middle; }
.cadm text.ol { fill: #80b060; }
.ax { font: 13px "Liberation Sans", sans-serif; text-anchor: middle; }
.axg { fill: #00c000; }
.axr { fill: #e02020; }
.tb4 { margin-top: 3px; height: 25px; gap: 4px; }
.tb4 .grip { margin: 0 0 0 4px; }
.tb4 .grip.g2 { margin: 0 -1px 0 3px; }
.tb4 .grip.g3 { margin: 0 0 0 7px; }
.s4 { margin-right: -4px; }
.s4c { margin-right: -3px; }
.v4 { margin-right: 3px; }
.tb4 .dd { width: 57px; margin: 0 1px 0 -2px; }
.s4s { margin: 0 -2px 0 0; }
.xeq { color: #777; }
.spin { width: 58px; height: 24px; border: 1px solid #777; display: flex; background: #fafafa; }
.spin-v { flex: 1; text-align: right; font-size: 14px; line-height: 22px; color: #888; padding-right: 7px; }
.spin-b { width: 15px; display: flex; flex-direction: column; gap: 6px; align-items: center; padding-top: 5px; }
.spin-b i { display: block; width: 0; height: 0; border: 3px solid transparent; }
.spin-b .up { border-top: 0; border-bottom: 3px solid #555; }
.spin-b .dn { border-bottom: 0; border-top: 3px solid #555; }
.lower { flex: 1; display: flex; margin-top: 3px; min-height: 0; }
.splitter { width: 12px; flex: none; padding: 2px 0 0 2px; background: repeating-linear-gradient(#e8e8e8 0 3px, #d0d0d0 3px 5px); }
.close-box { display: block; width: 10px; height: 10px; }
.lower-r { flex: 1; min-width: 0; background: #fff; display: flex; flex-direction: column; }
.tb5 { height: 25px; margin-top: 4px; gap: 6px; padding-left: 3px; }
.tb5 .sep { margin: 0 -2px 0 -1px; }
.close { margin-left: 2px; }
.gridwrap { flex: 1; margin-top: 1px; border: 1px solid #bbb; border-bottom: 0; background: #fff; overflow: hidden; }
.grid, .ptable { border-collapse: collapse; table-layout: fixed; width: 100%; }
.grid th, .grid td { border: 1px solid #c4c4c4; height: 19px; padding: 0; text-align: center; font-weight: 400; font-size: 12px; line-height: 14px; }
.grid th { background: linear-gradient(#ffffff, #ececec); }
.grid tr > :first-child { border-left: 0; }
.grid tr:first-child > * { border-top: 0; }
.g0 { width: 33px; } .g1 { width: 73px; } .g2c { width: 56px; } .g3c { width: 36px; } .g4 { width: 33px; } .g5 { width: 201px; } .g6 { width: 166px; }
.hot, .grid th.hot, .ptable th.hot { background: linear-gradient(#f9d9a4, #f1bd61); color: #5a0f6a; }
.rh { background: linear-gradient(#fafafa, #ececec); }
.grid .rh { background: #ffd591; color: #5a0f6a; }
.cur { background: #dcecfb; }
.grid .cur { border-left: 2px solid #000; }

/* right */
.right { width: 309px; flex: none; display: flex; flex-direction: column; }
.rtitle { height: 15px; margin-left: 2px; background: #0058dc; color: #fff; display: flex; align-items: center; justify-content: space-between; font-size: 13px; line-height: 14px; flex: none; }
.props { height: 253px; margin: 3px 0 0 3px; background: #fff; display: flex; overflow: hidden; flex: none; padding-left: 2px; }
.ptable { width: 298px; flex: none; height: 252px; }
.pc0 { width: 21px; } .pc1 { width: 121px; } .pc2 { width: 125px; } .pc3 { width: 31px; }
.ptable th, .ptable td { border: 1px solid #c0c0c0; height: 19px; padding: 0; font-weight: 400; font-size: 12px; line-height: 14px; white-space: nowrap; overflow: hidden; }
.ptable th { height: 22px; background: linear-gradient(#ffffff, #e9e9e9); text-align: center; }
.ptable tr > :first-child { border-left: 0; }
.ptable tr:first-child > * { border-top: 0; }
.ptable .rh { text-align: center; font-family: "Liberation Serif", serif; }
.ptable .act1 { background: #ffd591; color: #5a0f6a; }
.ptable .n { padding-left: 20px; }
.ptable .v { padding-left: 1px; }
.ptable td:last-child { text-align: center; }
.n.sel { background: #3399ff; color: #fff; }
.lk { color: #0000ff; }
.gr { color: #8c8c8c; }
.box { display: block; width: 13px; height: 13px; margin: 1px auto 0; border: 1px solid #444; background: #fff; }
.psb { width: 6px; height: 100%; background: linear-gradient(#f0f0f0 12px, #c8c8c8 12px 48px, #f0f0f0 48px); }
.preview { flex: 1; margin-top: 5px; border-left: 4px solid #fff; background: #000; overflow: hidden; }
.pvt text { font: 62px "Liberation Serif", serif; fill: #fff; }
.pvt text.cn { font: 46px "Noto Sans CJK SC", serif; }
.pvt text.lc { font-size: 76px; }
.pvt text.rd { fill: #e00000; }
```
